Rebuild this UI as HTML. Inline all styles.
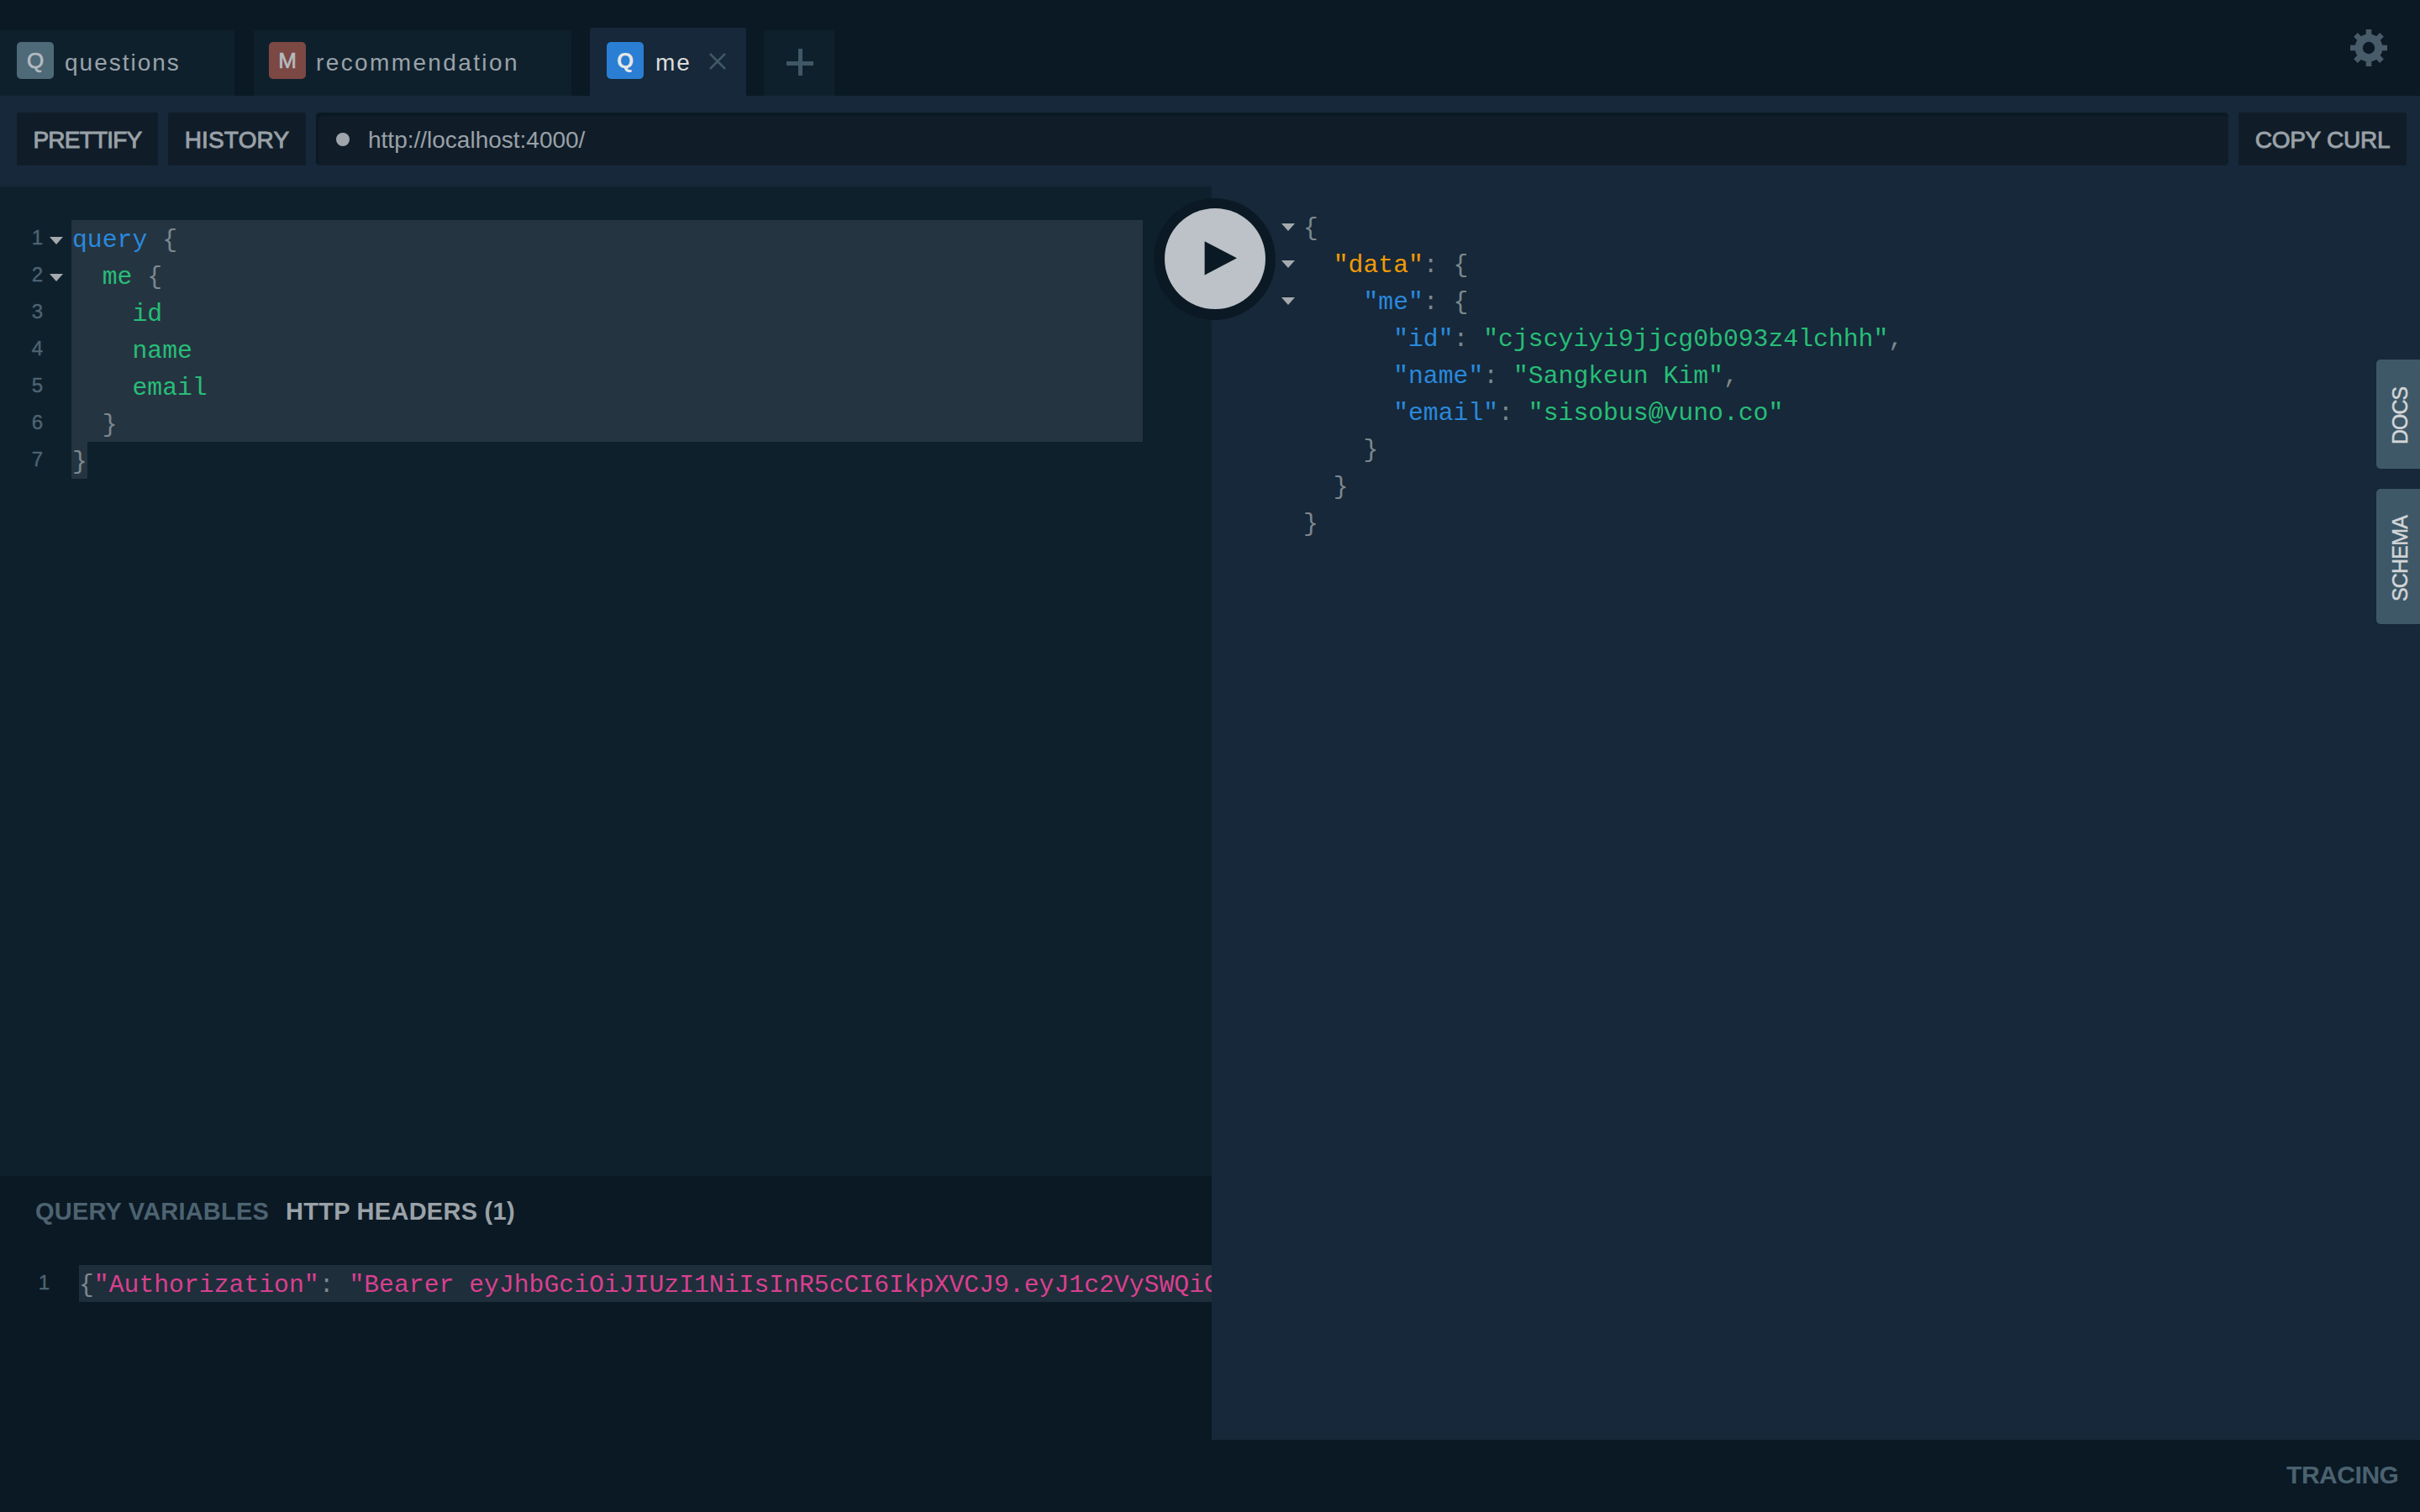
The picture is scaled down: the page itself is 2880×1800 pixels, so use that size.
<!DOCTYPE html>
<html><head><meta charset="utf-8">
<style>
*{box-sizing:border-box;margin:0;padding:0}
html,body{width:2880px;height:1800px;overflow:hidden;background:#0b1924;font-family:"Liberation Sans",sans-serif}
.abs{position:absolute}
.tab{position:absolute;top:36px;height:78px;background:#0f202d;border-radius:3px 3px 0 0}
.tab.active{top:33px;height:90px;background:#162839}
.ticon{position:absolute;top:14px;width:44px;height:44px;border-radius:5px;color:#b4bbc0;font-size:26px;text-align:center;line-height:44px;-webkit-text-stroke:0.7px currentColor}
.ttext{position:absolute;top:0;height:78px;line-height:78px;font-size:28px;color:#9aa2a8;letter-spacing:2px;white-space:pre}
#toolbar{position:absolute;left:0;top:114px;width:2880px;height:108px;background:#162839}
.btn{position:absolute;top:20px;height:63px;padding-top:1px;background:#101d29;border-radius:2px;color:#9aa1a7;font-size:28px;line-height:63px;letter-spacing:1.5px;text-align:center;white-space:pre;-webkit-text-stroke:0.9px #9aa1a7}
#editor{position:absolute;left:0;top:222px;width:1442px;height:1178px;background:#0f202d;overflow:hidden}
#result{position:absolute;left:1442px;top:222px;width:1438px;height:1492px;background:#162839;overflow:hidden}
#vars{position:absolute;left:0;top:1400px;width:1442px;height:400px;background:#0b1924;overflow:hidden}
.mono{font-family:"Liberation Mono",monospace;font-size:29.75px;white-space:pre}
.line{position:absolute;left:0;height:44px;line-height:44px}
.ln{position:absolute;left:0;width:51px;color:#4d6473;-webkit-text-stroke:0.4px #4d6473;font-family:"Liberation Sans",sans-serif;font-size:24px;text-align:right;height:44px;line-height:44px}
.fold{position:absolute;width:0;height:0;border-left:8px solid transparent;border-right:8px solid transparent;border-top:9px solid #a5aaae;margin-top:1px}
.kw{color:#2b88dc}.pr{color:#28bd77}.pu{color:#7d878e}.st{color:#f39a05}.vs{color:#28bd77}.ky{color:#2b88dc}.pk{color:#d9408f}
.sel{position:absolute;background:#243541}
.side{position:absolute;left:2828px;width:52px;background:#3e5867;border-radius:5px 0 0 5px}
.side span{position:absolute;left:50%;top:50%;transform:translate(calc(-50% + 2px),calc(-50% + 2px)) rotate(-90deg);color:#d2d5d8;font-size:25px;letter-spacing:0px;white-space:pre;-webkit-text-stroke:0.5px #d2d5d8}
.hdr{position:absolute;top:0;font-weight:bold;font-size:29px;white-space:pre}
</style></head>
<body>
<!-- tabs -->
<div class="tab" style="left:0;width:279px">
  <div class="ticon" style="left:20px;background:#4e6977">Q</div>
  <div class="ttext" style="left:77px">questions</div>
</div>
<div class="tab" style="left:302px;width:378px">
  <div class="ticon" style="left:18px;background:#7c4844">M</div>
  <div class="ttext" style="left:74px;letter-spacing:2.38px">recommendation</div>
</div>
<div class="tab active" style="left:702px;width:186px">
  <div class="ticon" style="left:20px;top:17px;background:#2a7ed3;color:#e6e6e6;font-weight:bold;-webkit-text-stroke:0">Q</div>
  <div class="ttext" style="left:78px;top:3px;color:#dcdcdc">me</div>
  <svg class="abs" style="left:142px;top:30px" width="20" height="20" viewBox="0 0 20 20"><path d="M1 1L19 19M19 1L1 19" stroke="#405866" stroke-width="2.6"/></svg>
</div>
<div class="tab" style="left:909px;width:84px">
  <div class="abs" style="left:27px;top:37px;width:32px;height:5px;background:#405866"></div>
  <div class="abs" style="left:40.5px;top:22px;width:5px;height:32px;background:#405866"></div>
</div>

<!-- gear -->
<svg class="abs" style="left:2797px;top:35px" width="44" height="44" viewBox="-22 -22 44 44">
  <defs><mask id="gm"><rect x="-22" y="-22" width="44" height="44" fill="#fff"/><circle r="7.2" fill="#000"/></mask></defs>
  <g fill="#475b68" mask="url(#gm)">
    <circle r="16.5"/>
    <rect x="-3.3" y="-22" width="6.6" height="44"/>
    <rect x="-3.3" y="-22" width="6.6" height="44" transform="rotate(45)"/>
    <rect x="-3.3" y="-22" width="6.6" height="44" transform="rotate(90)"/>
    <rect x="-3.3" y="-22" width="6.6" height="44" transform="rotate(135)"/>
  </g>
</svg>

<div id="toolbar">
  <div class="btn" style="left:20px;width:168px;letter-spacing:-0.79px">PRETTIFY</div>
  <div class="btn" style="left:200px;width:164px;letter-spacing:0.17px">HISTORY</div>
  <div class="btn" style="left:376px;width:2276px;border-radius:5px;text-align:left;letter-spacing:0;-webkit-text-stroke:0;box-shadow:inset 3px 4px 0 #0b1924">
    <div class="abs" style="left:24px;top:24px;width:16px;height:16px;border-radius:50%;background:#9fa5ab"></div>
    <div class="abs" style="left:62px;top:1px">http://localhost:4000/</div>
  </div>
  <div class="btn" style="left:2664px;width:200px;letter-spacing:-0.25px">COPY CURL</div>
</div>

<div id="editor">
  <div class="sel" style="left:85px;top:40px;width:1275px;height:264px"></div>
  <div class="sel" style="left:85px;top:304px;width:19px;height:44px"></div>
  <div class="abs" style="left:0;top:38.5px">
    <div class="ln" style="top:0">1</div><div class="ln" style="top:44px">2</div><div class="ln" style="top:88px">3</div><div class="ln" style="top:132px">4</div><div class="ln" style="top:176px">5</div><div class="ln" style="top:220px">6</div><div class="ln" style="top:264px">7</div>
    <div class="fold" style="left:59px;top:20px"></div>
    <div class="fold" style="left:59px;top:64px"></div>
  </div>
  <div class="abs mono" style="left:86px;top:42px">
<div class="line" style="top:0"><span class="kw">query</span> <span class="pu">{</span></div>
<div class="line" style="top:44px">  <span class="pr">me</span> <span class="pu">{</span></div>
<div class="line" style="top:88px">    <span class="pr">id</span></div>
<div class="line" style="top:132px">    <span class="pr">name</span></div>
<div class="line" style="top:176px">    <span class="pr">email</span></div>
<div class="line" style="top:220px">  <span class="pu">}</span></div>
<div class="line" style="top:264px"><span class="pu">}</span></div>
  </div>
</div>

<div id="result">
  <div class="abs" style="left:0;top:23px">
    <div class="fold" style="left:83px;top:20px"></div>
    <div class="fold" style="left:83px;top:64px"></div>
    <div class="fold" style="left:83px;top:108px"></div>
  </div>
  <div class="abs mono" style="left:109px;top:27.5px">
<div class="line" style="top:0"><span class="pu">{</span></div>
<div class="line" style="top:44px">  <span class="st">"data"</span><span class="pu">: {</span></div>
<div class="line" style="top:88px">    <span class="ky">"me"</span><span class="pu">: {</span></div>
<div class="line" style="top:132px">      <span class="ky">"id"</span><span class="pu">: </span><span class="vs">"cjscyiyi9jjcg0b093z4lchhh"</span><span class="pu">,</span></div>
<div class="line" style="top:176px">      <span class="ky">"name"</span><span class="pu">: </span><span class="vs">"Sangkeun Kim"</span><span class="pu">,</span></div>
<div class="line" style="top:220px">      <span class="ky">"email"</span><span class="pu">: </span><span class="vs">"sisobus@vuno.co"</span></div>
<div class="line" style="top:264px">    <span class="pu">}</span></div>
<div class="line" style="top:308px">  <span class="pu">}</span></div>
<div class="line" style="top:352px"><span class="pu">}</span></div>
  </div>
</div>

<!-- play button -->
<div class="abs" style="left:1372.5px;top:236px;width:145px;height:145px;border-radius:50%;background:#0b1924"></div>
<div class="abs" style="left:1386px;top:248px;width:120px;height:120px;border-radius:50%;background:#bcc2c7"></div>
<svg class="abs" style="left:1433px;top:287px" width="40" height="41" viewBox="0 0 40 41"><path d="M0.6 0.2L39 20.2L0.6 40.4Z" fill="#0b1924"/></svg>

<div id="vars">
  <div class="hdr" style="left:42px;top:26px;color:#4d6371;letter-spacing:0.2px">QUERY VARIABLES</div>
  <div class="hdr" style="left:340px;top:26px;color:#9aa2a8;letter-spacing:0.27px">HTTP HEADERS (1)</div>
  <div class="sel" style="left:94px;top:106px;width:1348px;height:44px;background:#1f2e3b"></div>
  <div class="ln" style="top:105px;left:8px">1</div>
  <div class="abs mono" style="left:94px;top:108px">
<div class="line" style="top:0"><span class="pu">{</span><span class="pk">"Authorization"</span><span class="pu">: </span><span class="pk">"Bearer eyJhbGciOiJIUzI1NiIsInR5cCI6IkpXVCJ9.eyJ1c2VySWQiOiJjanNjeWl5aTlqamNnMGIwOTN6NGxjaGhoIiwiaWF0IjoxNTUw"</span><span class="pu">}</span></div>
  </div>
</div>

<div class="side" style="top:428px;height:130px"><span style="letter-spacing:-1px">DOCS</span></div>
<div class="side" style="top:582px;height:161px"><span style="letter-spacing:-0.8px">SCHEMA</span></div>

<div class="hdr" style="left:2721px;top:1739px;color:#4a6270;font-size:30px;letter-spacing:-0.45px">TRACING</div>

</body></html>
